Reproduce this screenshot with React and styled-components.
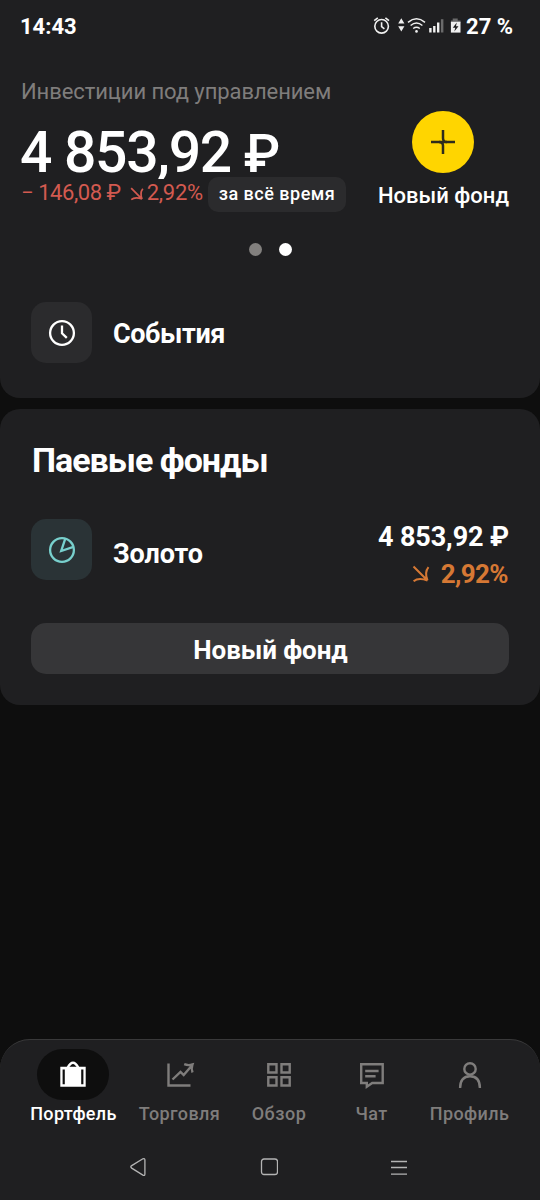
import styled, { createGlobalStyle } from "styled-components";

const App = () => {
  return (
    <>
      <GlobalStyle />
      <Screen>
        <TopCard>
          <StatusBar>
            <Label $size={22} $weight={700} $spacing={0}>14:43</Label>
            <StatusRight>
              <StatusIcons />
              <Label $size={22} $weight={700} $spacing={0}>27 %</Label>
            </StatusRight>
          </StatusBar>
          <Hero>
            <Summary>
              <Label $size={22} $color="#7f7d7c" $spacing={-0.08}>Инвестиции под управлением</Label>
              <Amount>4 853,92 <small>₽</small></Amount>
              <ChangeRow>
                <Change>
                  <Label $size={22} $color="#d35a50" $spacing={-0.45}>− 146,08 ₽</Label>
                  <ArrowDown size={14} color="#d35a50" width={1.7} />
                  <Label $size={22} $color="#d35a50" $spacing={-0.3}>2,92%</Label>
                </Change>
                <Period>за всё время</Period>
              </ChangeRow>
            </Summary>
            <AddFund>
              <AddCircle>
                <svg width="26" height="26" viewBox="0 0 26 26" fill="none" stroke="#2e2c1c" strokeWidth="2.5">
                  <path d="M13 1v8.2q0 3.8 3.8 3.8H25M1 13h8.2q3.8 0 3.8 3.8V25" />
                  <path d="M9 13h8" />
                </svg>
              </AddCircle>
              <Label $size={22} $weight={500} $spacing={0}>Новый фонд</Label>
            </AddFund>
          </Hero>
          <Dots>
            <Dot />
            <Dot $active />
          </Dots>
          <EventsRow>
            <Tile>
              <svg width="28" height="28" viewBox="0 0 28 28" fill="none" stroke="#fff" strokeWidth="2.3">
                <circle cx="14" cy="14" r="11.9" />
                <path d="M14 6.5v7.8l4.8 4.6" />
              </svg>
            </Tile>
            <RowTitle $spacing={-0.4}>События</RowTitle>
          </EventsRow>
        </TopCard>

        <FundsCard>
          <Heading>Паевые фонды</Heading>
          <FundRow>
            <Tile $bg="#2a3336">
              <svg width="28" height="28" viewBox="0 0 28 28" fill="none" stroke="#78d0cd" strokeWidth="2.3">
                <circle cx="14" cy="14" r="11.9" />
                <path d="M17.2 2.8L13.2 15l12.2-4.2" />
              </svg>
            </Tile>
            <RowTitle $shift={8} $spacing={-0.1}>Золото</RowTitle>
            <FundValue>
              <Label $size={27} $weight={700} $spacing={-0.1}>4 853,92 ₽</Label>
              <FundChange>
                <ArrowDown size={18} color="#d67834" width={2} />
                <Label $size={26} $weight={700} $color="#d67834" $spacing={-0.6}>2,92%</Label>
              </FundChange>
            </FundValue>
          </FundRow>
          <FundButton>Новый фонд</FundButton>
        </FundsCard>

        <BottomBar>
          <Tabs>
            {tabs.map((tab) => (
              <Tab key={tab.name} $active={tab.active}>
                <TabIcon $active={tab.active} $nudge={tab.nudge}>
                  <svg width="30" height="30" viewBox="0 0 30 30" fill="none" stroke="currentColor" strokeWidth="2.4">
                    {tab.icon}
                  </svg>
                </TabIcon>
                <TabName $spacing={tab.spacing}>{tab.name}</TabName>
              </Tab>
            ))}
          </Tabs>
          <SystemNav>
            <svg width="18" height="20" viewBox="0 0 18 20">
              <path d="M13.9 1.8L2.7 8.6q-1.8 1.2 0 2.5l11.2 7q2 1 2-1.1V3q0-2-2-1.2z" />
            </svg>
            <svg width="18" height="20" viewBox="0 0 18 20">
              <rect x="1.5" y="2" width="16" height="15.5" rx="2.5" />
            </svg>
            <svg width="18" height="20" viewBox="0 0 18 20">
              <path d="M1 4.5h16M1 10.5h16M1 17.2h16" />
            </svg>
          </SystemNav>
        </BottomBar>
      </Screen>
    </>
  );
};

const ArrowDown = ({ size, color, width }) => (
  <svg width={size} height={size} viewBox="0 0 18 18" fill="none" stroke={color} strokeWidth={(width * 18) / size}>
    <path d="M1.5 1.5L15.5 15.5M16.5 2.2Q12.2 7.5 15.5 15.5M1.6 16.2Q6.5 12.2 15.5 15.5" />
  </svg>
);

const StatusIcons = () => (
  <svg width="90" height="20" viewBox="0 0 90 20" fill="none">
    <g stroke="#f0f0f0" strokeWidth="1.6">
      <circle cx="8.6" cy="9.3" r="6.8" />
      <path d="M8.6 5.3v4.3l2.8 2.2M1.2 3.6L4.8 .8M16 3.6L12.4 .8" />
    </g>
    <path d="M28.3 1.2l3.1 5.2h-6.2zM28.3 14.4l3.1-5.2h-6.2z" fill="#f0f0f0" />
    <g stroke="#f0f0f0" strokeWidth="1.5">
      <path d="M35 5.3q8.5-7 17 0M37.6 8.5q5.9-4.8 11.8 0M40.2 11.5q3.3-2.5 6.6 0" />
    </g>
    <circle cx="43.5" cy="14.4" r="1.3" fill="#f0f0f0" />
    <path d="M56.2 11h2.4v4.5h-2.4zM60.1 9h2.4v6.5h-2.4zM64 5.6h2.4v9.9H64z" fill="#f0f0f0" />
    <path d="M67.9 2.2h2.5v13.3h-2.5z" fill="#6a6a6b" />
    <path d="M79.7 1.6h5v1.8h2.8v2.4H77.9V3.4h1.8z" fill="#6a6a6b" />
    <path d="M77.9 4.8h9.6v10.8h-9.6z" fill="#f0f0f0" />
    <path d="M83.8 5.4l-4 5.4h2.5l-1 3.8 4.2-5.4H83z" fill="#1f1f21" />
  </svg>
);

const tabs = [
  {
    name: "Портфель",
    active: true,
    spacing: 0.35,
    nudge: 1,
    icon: (
      <>
        <path d="M9.5 8q5.5-10.5 11 0" />
        <path d="M2.3 6.8h25.4v20H2.3zM4.6 9.4v14.8h2.2V9.4zM23.2 9.4v14.8h2.2V9.4z" fill="currentColor" fillRule="evenodd" stroke="none" />
      </>
    ),
  },
  {
    name: "Торговля",
    spacing: 0.4,
    nudge: 0,
    icon: <path d="M3.5 3.5v22h22M7.5 19.5l8-7.6 3.2 3.2 8.2-9.6M19.2 4.2q4 1.6 8.2.3q-1.4 3.9.1 8" />,
  },
  {
    name: "Обзор",
    spacing: 0.5,
    nudge: 1,
    icon: <path d="M4.3 4.3h8.2v8.2H4.3zM17.5 4.3h8.2v8.2h-8.2zM4.3 17.3h8.2v8.2H4.3zM17.5 17.3h8.2v8.2h-8.2z" />,
  },
  {
    name: "Чат",
    spacing: 0.3,
    nudge: 0,
    icon: (
      <>
        <path d="M4.2 4.3h21.5V23H15.2l-5.4 3.7V23H4.2z" />
        <path d="M8.2 11h13.4M8.2 16.2h10.4" />
      </>
    ),
  },
  {
    name: "Профиль",
    spacing: 0.4,
    nudge: 0,
    icon: (
      <>
        <circle cx="15" cy="8.9" r="5.7" />
        <path d="M5.1 28q0-11.7 9.9-11.7T24.9 28" />
      </>
    ),
  },
];

const GlobalStyle = createGlobalStyle`
* {
  box-sizing: border-box;
}
body {
  margin: 0;
  background: #0e0e0e;
}
svg {
  display: block;
  flex-shrink: 0;
}
`;

const Screen = styled.div`
display: flex;
flex-direction: column;
width: 540px;
height: 1200px;
overflow: hidden;
background: #0e0e0e;
color: #fff;
font-family: Roboto, sans-serif;
`;

const Label = styled.span`
font-size: ${(p) => p.$size}px;
font-weight: ${(p) => p.$weight || 400};
line-height: 26px;
letter-spacing: ${(p) => p.$spacing}px;
color: ${(p) => p.$color || "#fff"};
white-space: nowrap;
`;

const TopCard = styled.section`
height: 398px;
background: #1f1f21;
border-radius: 0 0 20px 20px;
`;

const StatusBar = styled.div`
display: flex;
align-items: center;
justify-content: space-between;
height: 53px;
padding: 0 27px 0 20px;
`;

const StatusRight = styled.div`
display: flex;
align-items: center;
gap: 3px;
`;

const Hero = styled.div`
display: flex;
justify-content: space-between;
padding: 26px 31px 0 21px;
height: 190px;
`;

const Summary = styled.div`
display: flex;
flex-direction: column;
align-items: flex-start;
`;

const Amount = styled.div`
height: 52px;
margin-top: 22px;
overflow: hidden;
font-size: 57px;
font-weight: 500;
line-height: 52px;
letter-spacing: -1.3px;
text-indent: -1px;
white-space: nowrap;
small {
  font-size: 53px;
  line-height: 1;
}
`;

const ChangeRow = styled.div`
display: flex;
height: 35px;
margin-top: -2px;
`;

const Change = styled.div`
display: flex;
align-items: center;
width: 187px;
height: 31px;
svg {
  margin: 3px 3px 0 9px;
}
`;

const Period = styled.div`
width: 138px;
height: 35px;
border-radius: 10px;
background: #2b2b2d;
font-size: 18px;
font-weight: 500;
line-height: 34px;
letter-spacing: 0.5px;
text-align: center;
white-space: nowrap;
`;

const AddFund = styled.div`
display: flex;
flex-direction: column;
align-items: center;
gap: 10px;
padding-top: 32px;
`;

const AddCircle = styled.div`
display: flex;
align-items: center;
justify-content: center;
width: 62px;
height: 62px;
margin-right: 1px;
border-radius: 50%;
background: #ffd500;
`;

const Dots = styled.div`
display: flex;
justify-content: center;
gap: 17px;
height: 13px;
`;

const Dot = styled.span`
width: 13px;
height: 13px;
border-radius: 50%;
background: ${(p) => (p.$active ? "#fff" : "#82807e")};
`;

const EventsRow = styled.div`
display: flex;
align-items: center;
gap: 21px;
margin: 46px 31px 0;
`;

const Tile = styled.div`
display: flex;
align-items: center;
justify-content: center;
width: 61px;
height: 61px;
border-radius: 15px;
background: ${(p) => p.$bg || "#2b2b2d"};
`;

const RowTitle = styled.div`
padding-top: ${(p) => p.$shift || 2}px;
font-size: 27px;
font-weight: 700;
line-height: 32px;
letter-spacing: ${(p) => p.$spacing}px;
`;

const FundsCard = styled.section`
height: 296px;
margin-top: 11px;
padding: 31px 31px 0;
border-radius: 20px;
background: #1f1f21;
`;

const Heading = styled.h2`
margin: 0;
padding-left: 1px;
font-size: 34px;
font-weight: 700;
line-height: 40px;
letter-spacing: -1px;
`;

const FundRow = styled.div`
display: flex;
align-items: center;
gap: 21px;
margin-top: 39px;
height: 61px;
`;

const FundValue = styled.div`
display: flex;
flex-direction: column;
align-items: flex-end;
gap: 11px;
margin-left: auto;
padding-top: 11px;
`;

const FundChange = styled.div`
display: flex;
align-items: center;
gap: 11px;
padding-right: 1px;
`;

const FundButton = styled.button`
display: block;
width: 478px;
height: 51px;
margin: 43px 0 0;
padding: 2px 0 0 1px;
border: 0;
border-radius: 15px;
background: #363638;
color: #fff;
font-family: inherit;
font-size: 26px;
font-weight: 700;
letter-spacing: -0.1px;
`;

const BottomBar = styled.nav`
height: 161px;
margin-top: auto;
border-top: 1px solid #39393a;
border-radius: 30px 30px 0 0;
background: #1f1f21;
`;

const Tabs = styled.div`
display: grid;
grid-template-columns: 107px 105px 94px 91px 105px;
padding: 9px 0 0 20px;
`;

const Tab = styled.div`
display: flex;
flex-direction: column;
align-items: center;
color: ${(p) => (p.$active ? "#fff" : "#7f7d7c")};
`;

const TabIcon = styled.div`
display: flex;
align-items: center;
justify-content: center;
width: 72px;
height: 51px;
margin-right: ${(p) => p.$nudge}px;
border-radius: 26px;
background: ${(p) => (p.$active ? "#0e0e0e" : "transparent")};
`;

const TabName = styled.span`
margin-top: 3px;
font-size: 18px;
font-weight: 500;
line-height: 22px;
letter-spacing: ${(p) => p.$spacing}px;
`;

const SystemNav = styled.div`
display: flex;
justify-content: space-between;
margin-top: 32px;
padding: 0 132px 0 129px;
svg {
  fill: none;
  stroke: #b4b4b4;
  stroke-width: 1.3;
}
`;

export default App;
